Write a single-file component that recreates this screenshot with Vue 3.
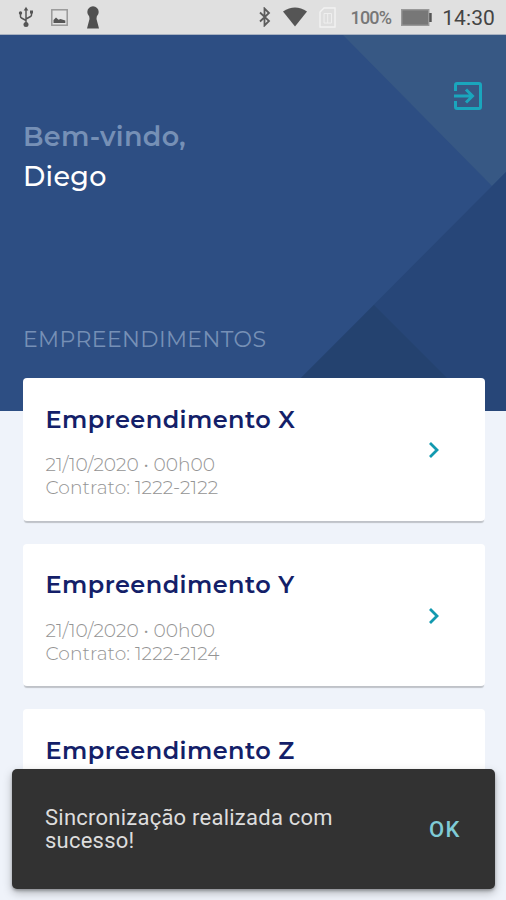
<template>
  <div class="screen">
    <div class="status-bar">
      <div class="status-bar__left">
        <svg class="icon-usb" width="16" height="22" viewBox="0 0 16 22">
          <path d="M8 3v16M2.500 7v3.500q0 1 1 1.500L8 14.500M13.500 6v3q0 1-1 1.500L8 13" fill="none" stroke="#555" stroke-width="1.500" />
          <path d="M5.700 4.500L8 .8l2.300 3.700z" fill="#555" />
          <circle cx="8" cy="18.500" r="2.500" fill="#555" />
          <circle cx="2.500" cy="7" r="1.700" fill="#555" />
          <rect x="12" y="4.500" width="3" height="3" fill="#555" />
        </svg>
        <svg class="icon-image" width="17" height="17" viewBox="0 0 17 17">
          <rect x=".8" y=".8" width="15.400" height="15.400" fill="#e4e4e4" stroke="#999" stroke-width="1.500" />
          <path d="M2.500 14v-3l2.500-2.500 2.500 2.300 2-.8 4.800 1.500V14z" fill="#555" />
        </svg>
        <svg class="icon-keyhole" width="14" height="23" viewBox="0 0 14 23">
          <circle cx="7" cy="6" r="5.700" fill="#505050" />
          <path d="M3 8h8l-.5 5L13 22.500H1L3.500 13z" fill="#505050" />
        </svg>
      </div>
      <div class="status-bar__right">
        <svg class="icon-bluetooth" width="12" height="20" viewBox="0 0 12 20">
          <path d="M1 5.500l9 8.500-4.500 4.500v-17L10 6l-9 8.500" fill="none" stroke="#5c5c5c" stroke-width="1.800" />
        </svg>
        <svg class="icon-wifi" width="24" height="20" viewBox="0 0 24 20">
          <path d="M0 4.500Q12-3.500 24 4.500L12 19.500z" fill="#555" />
        </svg>
        <svg class="icon-sim" width="17" height="21" viewBox="0 0 17 21">
          <path d="M5 1h11v19H1V5z" fill="#dedede" stroke="#f2f2f2" stroke-width="1.400" />
          <path d="M5 6.500h7.500V16H5zM8.700 6.500V16" fill="none" stroke="#efefef" stroke-width="1" />
        </svg>
        <span class="status-bar__percent">100%</span>
        <svg class="icon-battery" width="31" height="17" viewBox="0 0 31 17">
          <rect x=".7" y=".7" width="27" height="15.600" fill="#777" stroke="#999" stroke-width="1.400" />
          <rect x="28.200" y="4" width="2.500" height="9" fill="#555" />
        </svg>
        <span class="status-bar__time">14:30</span>
      </div>
    </div>

    <header class="header">
      <svg class="header__pattern" width="506" height="376" viewBox="0 0 506 376">
        <path d="M343 0h163v137l-14 14z" fill="#375884" />
        <path d="M506 137v239H268z" fill="#274678" />
        <path d="M374 270l106 106H268z" fill="#24426f" />
      </svg>
      <div class="header__top">
        <div class="greeting">
          <p class="greeting__hello">Bem-vindo,</p>
          <p class="greeting__name">Diego</p>
        </div>
        <button class="logout" aria-label="Sair">
          <svg width="28" height="28" viewBox="0 0 28 28" fill="none" stroke="#1aa6bd">
            <path d="M1.500 9V3q0-1.500 1.500-1.500h22q1.500 0 1.500 1.500v22q0 1.500-1.500 1.500H3q-1.500 0-1.500-1.500v-6" stroke-width="3" />
            <path d="M0 14h19M12 7.500l6.500 6.500-6.500 6.500" stroke-width="3" />
          </svg>
        </button>
      </div>
      <h2 class="header__title">EMPREENDIMENTOS</h2>
    </header>

    <main class="cards">
      <article v-for="item in items" :key="item.id" class="card">
        <div class="card__info">
          <h3>{{ item.name }}</h3>
          <template v-if="item.contract">
            <p>{{ item.date }}</p>
            <p class="card__contract">Contrato: {{ item.contract }}</p>
          </template>
        </div>
        <svg class="card__arrow" width="12" height="18" viewBox="0 0 12 18">
          <path d="M2 2l7 7-7 7" fill="none" stroke="#1299af" stroke-width="2.800" />
        </svg>
      </article>
    </main>

    <div v-if="showSnackbar" class="snackbar">
      <span class="snackbar__text">Sincronização realizada com sucesso!</span>
      <button class="snackbar__action" @click="showSnackbar = false">OK</button>
    </div>
  </div>
</template>

<script setup>
  import { ref } from "vue";

  const showSnackbar = ref(true);

  const items = [
    { id: 1, name: "Empreendimento X", date: "21/10/2020 • 00h00", contract: "1222-2122" },
    { id: 2, name: "Empreendimento Y", date: "21/10/2020 • 00h00", contract: "1222-2124" },
    { id: 3, name: "Empreendimento Z" },
  ];
</script>

<style>
body {
  margin: 0;
}
</style>

<style scoped>
.screen {
  position: relative;
  width: 506px;
  height: 900px;
  overflow: hidden;
  background: #eff3fa;
  font-family: Montserrat, Inter, sans-serif;
}

.screen p,
.screen h2,
.screen h3 {
  margin: 0;
}

.screen button {
  padding: 0;
  border: 0;
  background: none;
  cursor: pointer;
}

.screen svg {
  display: block;
  flex-shrink: 0;
}

.status-bar {
  display: flex;
  justify-content: space-between;
  box-sizing: border-box;
  height: 35px;
  padding: 0 11px 0 18px;
  background: #e0e0e0;
  border-bottom: 1px solid #a9b2c1;
  font-family: Roboto, sans-serif;
}

.status-bar__left,
.status-bar__right {
  display: flex;
  align-items: center;
}

.icon-image {
  margin-left: 17px;
}

.icon-keyhole {
  margin-left: 18px;
}

.icon-wifi {
  margin-left: 12px;
}

.icon-sim {
  margin-left: 12px;
}

.status-bar__percent {
  margin-left: 14px;
  font-size: 18px;
  font-weight: 500;
  letter-spacing: -0.8px;
  color: #777;
}

.icon-battery {
  margin-left: 10px;
}

.status-bar__time {
  margin-left: 10px;
  padding-top: 1px;
  font-size: 21px;
  letter-spacing: 0.1px;
  color: #444;
}

.header {
  position: relative;
  display: flex;
  flex-direction: column;
  justify-content: space-between;
  box-sizing: border-box;
  height: 376px;
  padding: 47px 24px 57px 23px;
  background: #2d4e83;
}

.header__pattern {
  position: absolute;
  top: 0;
  left: 0;
}

.header__top {
  position: relative;
  display: flex;
  justify-content: space-between;
}

.greeting {
  padding-top: 35px;
  font-size: 27px;
  line-height: 40px;
}

.greeting__hello {
  font-weight: 600;
  letter-spacing: 0.3px;
  color: #7690b6;
}

.greeting__name {
  font-weight: 500;
  letter-spacing: 0.3px;
  color: #fff;
}

.logout {
  width: 28px;
  height: 28px;
}

.header__title {
  position: relative;
  font-size: 22px;
  font-weight: 400;
  line-height: 28px;
  letter-spacing: 0.4px;
  color: #7690b6;
}

.cards {
  position: relative;
  display: flex;
  flex-direction: column;
  gap: 23px;
  margin-top: -33px;
  padding: 0 21.500px 0 23px;
}

.card {
  display: flex;
  align-items: flex-start;
  justify-content: space-between;
  box-sizing: border-box;
  height: 142.500px;
  padding: 26.500px 44.500px 0 22.500px;
  border-radius: 4px;
  background: #fff;
  box-shadow: 0 3px 1px -1px rgba(0, 0, 0, 0.2);
}

.card__info {
  color: #949494;
  font-size: 18.600px;
  font-weight: 300;
  line-height: 23px;
}

.card__info h3 {
  margin-bottom: 18.500px;
  font-size: 24px;
  font-weight: 600;
  line-height: 30px;
  letter-spacing: 0.450px;
  color: #141f69;
}

.card__contract {
  letter-spacing: 0.080px;
}

.card__arrow {
  margin-top: 36.500px;
}

.snackbar {
  position: absolute;
  left: 12px;
  right: 11px;
  bottom: 11px;
  display: flex;
  align-items: center;
  justify-content: space-between;
  box-sizing: border-box;
  height: 120px;
  padding: 0 34px 0 33px;
  border-radius: 5px;
  background: #323232;
  box-shadow: 0 4px 10px rgba(0, 0, 0, 0.25), 0 2px 3px rgba(0, 0, 0, 0.25);
  font-family: Roboto, sans-serif;
}

.snackbar__text {
  width: 320px;
  font-size: 22px;
  line-height: 23px;
  letter-spacing: 0.240px;
  color: #ddd;
}

.snackbar__action {
  font-family: inherit;
  font-size: 22px;
  font-weight: 500;
  letter-spacing: 1.500px;
  color: #7fcbd6;
}
</style>
